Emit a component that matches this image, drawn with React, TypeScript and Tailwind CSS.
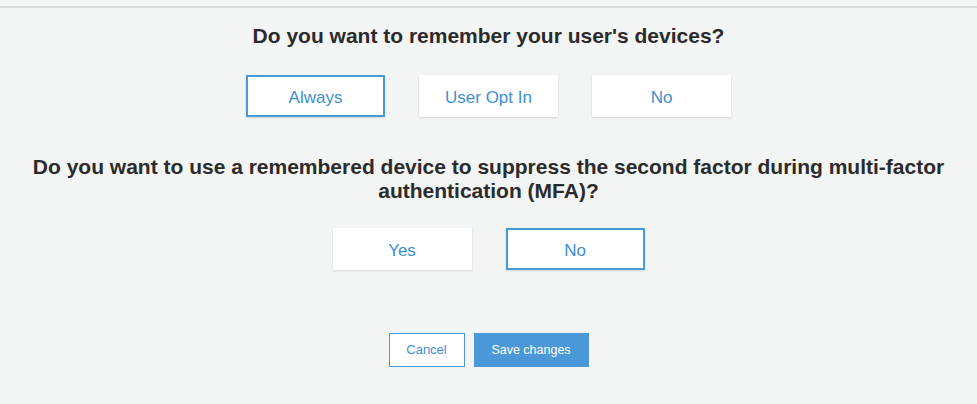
import React, { useState } from "react";

type Option = { id: string; label: string };

const rememberOptions: Option[] = [
  { id: "always", label: "Always" },
  { id: "optin", label: "User Opt In" },
  { id: "no", label: "No" },
];

const suppressOptions: Option[] = [
  { id: "yes", label: "Yes" },
  { id: "no", label: "No" },
];

const ChoiceRow = ({
  options,
  value,
  onChange,
}: {
  options: Option[];
  value: string;
  onChange: (id: string) => void;
}) => (
  <div className="flex justify-center gap-[34px]">
    {options.map((opt) => {
      const active = opt.id === value;
      return (
        <button
          key={opt.id}
          onClick={() => onChange(opt.id)}
          className={
            active
              ? "w-[139px] h-[42px] bg-white border-2 border-[#4a9ad8] text-[17px] leading-none pt-[2px] text-[#3d8fd0] shadow-[0_1px_2px_rgba(0,0,0,0.12)]"
              : "w-[139px] h-[42px] bg-white border-2 border-white text-[17px] leading-none pt-[2px] text-[#3d8fd0] shadow-[0_1px_2px_rgba(0,0,0,0.15)]"
          }
        >
          {opt.label}
        </button>
      );
    })}
  </div>
);

export default function App() {
  const [remember, setRemember] = useState("always");
  const [suppress, setSuppress] = useState("no");

  return (
    <div
      className="w-[977px] h-[404px] bg-[#f3f4f4] pt-[6px]"
      style={{ fontFamily: '"Liberation Sans", Arial, sans-serif' }}
    >
      <div className="h-[2px] bg-[#d8dadb]" />

      {/* device remembering */}
      <h2 className="mt-[16px] text-center text-[21px] leading-[24px] font-bold text-[#2b2b2b]">
        Do you want to remember your user's devices?
      </h2>

      <div className="mt-[27px]">
        <ChoiceRow options={rememberOptions} value={remember} onChange={setRemember} />
      </div>

      {/* second factor suppression */}
      <h2 className="mt-[38px] px-4 text-center text-[21px] leading-[24px] font-bold text-[#2b2b2b]">
        Do you want to use a remembered device to suppress the second factor during multi-factor
        authentication (MFA)?
      </h2>

      <div className="mt-[25px]">
        <ChoiceRow options={suppressOptions} value={suppress} onChange={setSuppress} />
      </div>

      <div className="mt-[63px] flex justify-center gap-[9px]">
        <button className="w-[76px] h-[34px] bg-white border border-[#4a9ad8] text-[13px] text-[#3d8fd0]">
          Cancel
        </button>
        <button className="w-[115px] h-[34px] bg-[#4a98d7] text-[12.5px] text-white">
          Save changes
        </button>
      </div>
    </div>
  );
}
